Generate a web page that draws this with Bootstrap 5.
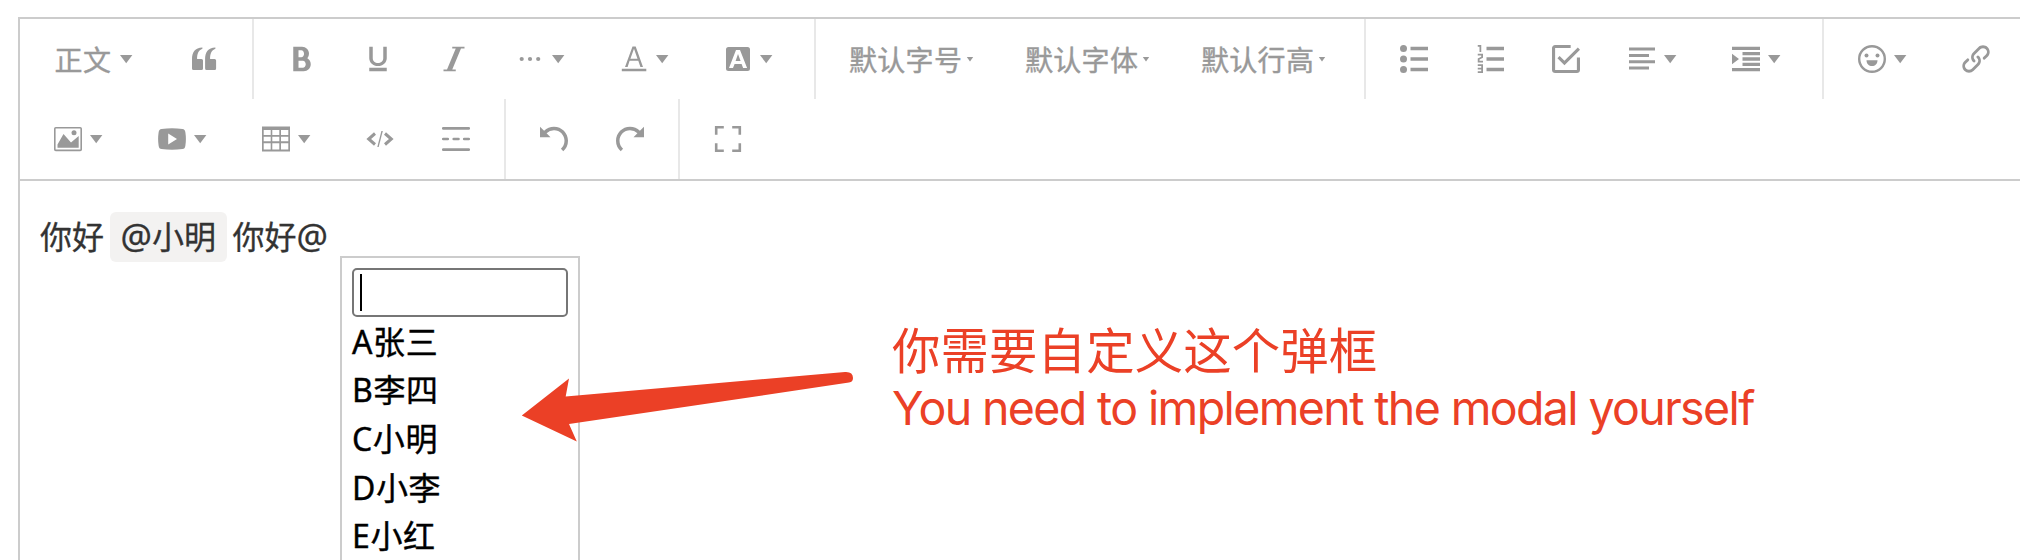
<!DOCTYPE html>
<html lang="zh-CN">
<head>
<meta charset="utf-8">
<title>Editor mention</title>
<link href="https://cdn.jsdelivr.net/npm/bootstrap@5.3.0/dist/css/bootstrap.min.css" rel="stylesheet">
<style>
body{font-family:"Noto Sans","Noto Sans CJK SC",sans-serif;width:2020px;height:560px;color:#333;background:#fff}
.editor{margin:17px 0 0 18px;border:2px solid #ccc;border-width:2px 0 0 2px;height:543px}
.toolbar{border-bottom:2px solid #ccc;height:162px}
.tool-line{height:80px}
.tool-group{padding:0 10px;border-right:2px solid #e8e8e8}
.tool-group:last-child{border-right:0}
.tool{padding:0 24px;border:0;background:none;color:#999;font:28px/28px "Noto Sans CJK SC",sans-serif;white-space:nowrap}
.tool svg{width:28px;height:28px;fill:currentColor;flex:none;display:block}
.tool.style-menu{width:136px}
.tool.style-menu span{width:58px;margin-left:0;letter-spacing:.5px}
.tool.pick{width:176px}
.tool span{flex:none;margin-left:-1px;-webkit-text-stroke:.4px;letter-spacing:.3px}
.tool.pick span{width:113px}
.tool.pick svg{width:16px;height:16px}
.content-area{padding:31px 20px 0;font-size:32px;line-height:50px;height:81px;-webkit-text-stroke:.3px}
.content-area .at{font-size:35px;line-height:40px}
.mention{background:#f3f2f1;border-radius:6px;padding:0 10.500px;margin:0 6px;height:50px;line-height:50px}
.mention-modal{left:340px;top:256px;width:240px;height:320px;border:2px solid #ccc;padding:10px;color:#000;background:#fff}
.mention-modal .search{height:49px;border:2px solid #767676;border-radius:5px;padding:4px 6px;background:#fff}
.search i{display:block;width:2px;height:37px;background:#000}
.mention-modal ul{padding-top:.5px;-webkit-text-stroke:.4px;letter-spacing:.6px}
.mention-modal li{font-size:32px;height:48.700px;line-height:48.700px}
.arrow{left:500px;top:340px}
.note{left:892px;top:318px;color:#eb4026;white-space:nowrap}
.note .zh{font:48.400px/60px "Noto Sans CJK SC",sans-serif;letter-spacing:.15px;height:62px}
.note .en{font:46.500px/56px Inter,sans-serif;letter-spacing:-1.620px}
</style>
</head>
<body class="overflow-hidden position-relative">
<svg class="d-none">
<symbol id="caret" viewBox="0 0 28 28"><path d="M8 10h12.4L14.2 18.200z"/></symbol>
<symbol id="small-caret" viewBox="0 0 16 16"><path d="M4.800 6h6.400L8 10.500z"/></symbol>
</svg>
<div class="editor">
 <div class="toolbar">
  <div class="tool-line d-flex">
   <div class="tool-group d-flex">
    <button class="tool style-menu d-flex align-items-center"><span>正文</span><svg><use href="#caret"/></svg></button>
    <button class="tool d-flex align-items-center"><svg viewBox="0 0 28 28"><path d="M12.400 2.500v1.200C8.400 5.200 7 9 7.100 14H11.500Q13 14 13 15.500V23.500Q13 25 11.500 25H3.500Q2 25 2 23.500V14C2 7.500 5 2.500 12.400 2.500zM25.400 2.500v1.200C21.400 5.200 20 9 20.100 14H24.600Q26.100 14 26.100 15.500V23.500Q26.100 25 24.600 25H16.600Q15.100 25 15.100 23.500V14C15.100 7.500 18 2.500 25.400 2.500z"/></svg></button>
   </div>
   <div class="tool-group d-flex">
    <button class="tool d-flex align-items-center"><svg viewBox="0 0 1024 1024"><path d="M707.872 484.640A254.880 254.880 0 0 0 768 320c0-141.152-114.848-256-256-256H192v896h384c141.152 0 256-114.848 256-256a256.096 256.096 0 0 0-124.128-219.360zM384 192h101.504c55.968 0 101.504 57.408 101.504 128s-45.536 128-101.504 128H384V192zm159.008 640H384v-256h159.008c58.464 0 106.016 57.408 106.016 128s-47.552 128-106.016 128z"/></svg></button>
    <button class="tool d-flex align-items-center"><svg viewBox="0 0 1024 1024"><path d="M704 64h128v416c0 159-143 288-320 288S192 639 192 480V64h128v416c0 99 86 176 192 176s192-77 192-176zM192 832h640v128H192z"/></svg></button>
    <button class="tool d-flex align-items-center"><svg viewBox="0 0 1024 1024"><path d="M896 64v64h-128L448 896h128v64H128v-64h128L576 128h-128V64z"/></svg></button>
    <button class="tool d-flex align-items-center"><svg viewBox="0 0 28 28"><circle cx="5.700" cy="14" r="2.100"/><circle cx="14" cy="14" r="2.100"/><circle cx="22.200" cy="14" r="2.100"/></svg><svg><use href="#caret"/></svg></button>
    <button class="tool d-flex align-items-center"><svg viewBox="0 0 28 28"><path d="M12.500 1.600h3.200L23 22h-2.600l-2.100-6.200H9.600L7.600 22H5zM10.400 13.700h7.100L14 3.800zM1.800 23.700h24.500v2.500H1.800z"/></svg><svg><use href="#caret"/></svg></button>
    <button class="tool d-flex align-items-center"><svg viewBox="0 0 28 28"><path fill-rule="evenodd" d="M4.500 2h19Q26 2 26 4.500v19Q26 26 23.500 26h-19Q2 26 2 23.500v-19Q2 2 4.500 2zM12 5L5 23h4l1.600-4h7l1.500 4h4L16 5zM14 9l2.600 7h-5z"/></svg><svg><use href="#caret"/></svg></button>
   </div>
   <div class="tool-group d-flex">
    <button class="tool pick d-flex align-items-center"><span>默认字号</span><svg><use href="#small-caret"/></svg></button>
    <button class="tool pick d-flex align-items-center"><span>默认字体</span><svg><use href="#small-caret"/></svg></button>
    <button class="tool pick d-flex align-items-center"><span>默认行高</span><svg><use href="#small-caret"/></svg></button>
   </div>
   <div class="tool-group d-flex">
    <button class="tool d-flex align-items-center"><svg viewBox="0 0 1024 1024"><path d="M384 64h640v128H384zM384 448h640v128H384zM384 832h640v128H384zM0 128a128 128 0 1 1 256 0 128 128 0 0 1-256 0zm0 384a128 128 0 1 1 256 0 128 128 0 0 1-256 0zm0 384a128 128 0 1 1 256 0 128 128 0 0 1-256 0z"/></svg></button>
    <button class="tool d-flex align-items-center"><svg viewBox="0 0 1024 1024"><path d="M384 832h640v128H384zm0-384h640v128H384zm0-384h640v128H384zM192 0v256H128V64H64V0zM128 526.016v50.016h128v64H64v-146.016l128-60V384H64v-64h192v146.016zM256 704v320H64v-64h128v-64H64v-64h128v-64H64v-64z"/></svg></button>
    <button class="tool d-flex align-items-center"><svg viewBox="0 0 1024 1024"><path d="M278.750 403.900l-79.640 79.640L455.100 739.550l568.900-568.880-79.640-79.640L455.100 580.260zM910.200 910.200H113.800V113.800h568.900V0H113.800C51.200 0 0 51.200 0 113.800v796.400c0 62.600 51.200 113.800 113.800 113.800h796.400c62.600 0 113.800-51.200 113.800-113.800V455.100h-113.800z"/></svg></button>
    <button class="tool d-flex align-items-center"><svg viewBox="0 0 28 28"><path d="M1 2.600h26v3H1zM1 9h20v3H1zM1 15.200h26v3H1zM1 21.600h20v3H1z"/></svg><svg><use href="#caret"/></svg></button>
    <button class="tool d-flex align-items-center"><svg viewBox="0 0 1024 1024"><path d="M0 60h1024v124H0zm384 192h640v124H384zm0 198h640v124H384zm0 198h640v124H384zM0 840h1024v124H0zm0-136V320l256 192z"/></svg><svg><use href="#caret"/></svg></button>
   </div>
   <div class="tool-group d-flex">
    <button class="tool d-flex align-items-center"><svg viewBox="0 0 28 28"><circle cx="14" cy="14" r="12.800" fill="none" stroke="currentColor" stroke-width="2.400"/><circle cx="8.500" cy="10.500" r="2"/><circle cx="19.500" cy="10.500" r="2"/><path d="M8.500 15.200h11C19.500 19 17 21 14 21s-5.500-2-5.500-5.800z"/></svg><svg><use href="#caret"/></svg></button>
    <button class="tool d-flex align-items-center"><svg viewBox="0 0 1024 1024"><path d="M440.200 635.800a51.800 51.800 0 0 1-36.800-15.200c-95.100-95.100-95.100-249.900 0-345.100l192-192C641.500 37.400 702.800 12 768 12s126.400 25.400 172.500 71.500c95.100 95.100 95.100 249.900 0 345.100l-87.800 87.800a52 52 0 1 1-73.500-73.500l87.800-87.800a140.200 140.200 0 0 0 0-198.100c-26.500-26.500-61.600-41-99-41s-72.600 14.600-99 41l-192 192a140.200 140.200 0 0 0 0 198.100 52 52 0 0 1-36.800 88.700zM256 1012a242.400 242.400 0 0 1-172.500-71.500c-95.100-95.100-95.100-249.900 0-345.100l87.800-87.800a52 52 0 1 1 73.500 73.500l-87.800 87.800a140.200 140.200 0 0 0 0 198.100c26.500 26.500 61.600 41 99 41s72.600-14.600 99-41l192-192a140.200 140.200 0 0 0 0-198.100 52 52 0 1 1 73.500-73.500c95.100 95.100 95.100 249.900 0 345.100l-192 192A242.400 242.400 0 0 1 256 1012z"/></svg></button>
   </div>
  </div>
  <div class="tool-line d-flex">
   <div class="tool-group d-flex">
    <button class="tool d-flex align-items-center"><svg viewBox="0 0 28 28"><rect x=".8" y="2.700" width="26.400" height="22.700" rx="1" fill="none" stroke="currentColor" stroke-width="1.600"/><path d="M3.500 22.700v-3.200L9.500 9l7.500 8.600 7.700-6.600v11.700z"/><circle cx="20" cy="7.800" r="2.500"/></svg><svg><use href="#caret"/></svg></button>
    <button class="tool d-flex align-items-center"><svg viewBox="0 0 28 28"><path fill-rule="evenodd" d="M3.500 4Q14 2.700 24.500 4Q27 4 27.400 7.500Q28.400 14 27.400 20.500Q27 24 24.500 24Q14 25.300 3.500 24Q1 24 .6 20.500Q-.4 14 .6 7.500Q1 4 3.500 4zM10.200 8.400V19.600L19 14z"/></svg><svg><use href="#caret"/></svg></button>
    <button class="tool d-flex align-items-center"><svg viewBox="0 0 28 28"><path fill-rule="evenodd" d="M0 1.500h28v25H0zM1.700 5v5h7V5zM10.300 5v5h7V5zM19 5v5h7.300V5zM1.700 11.700v4.600h7v-4.600zM10.300 11.700v4.600h7v-4.600zM19 11.700v4.600h7.300v-4.600zM1.700 18.200v6.300h7v-6.300zM10.300 18.200v6.300h7v-6.300zM19 18.200v6.300h7.300v-6.300z"/></svg><svg><use href="#caret"/></svg></button>
    <button class="tool d-flex align-items-center"><svg viewBox="0 0 28 28"><path d="M9 8.500L2.700 14L9 19.500M19 8.500L25.300 14L19 19.500" fill="none" stroke="currentColor" stroke-width="3"/><path d="M15.400 6h1.400L12.700 22h-1.400z"/></svg></button>
    <button class="tool d-flex align-items-center"><svg viewBox="0 0 28 28"><path d="M1.200 3.400h25.600M1.200 24.600h25.600M1.200 14h4.600M11.700 14h4.800M22.200 14h4.600" stroke="currentColor" stroke-width="2.600" stroke-linecap="round"/></svg></button>
   </div>
   <div class="tool-group d-flex">
    <button class="tool d-flex align-items-center"><svg viewBox="0 0 1024 1024"><path id="turn" d="M512 64A510.300 510.300 0 0 0 150 214L0 64v384h384L240.500 304.500A382.800 382.800 0 0 1 512 192c212 0 384 172 384 384 0 114.700-50.300 217.600-130 288l84.700 96A510.700 510.700 0 0 0 1024 576C1024 293.200 794.800 64 512 64z"/></svg></button>
    <button class="tool d-flex align-items-center"><svg viewBox="0 0 1024 1024"><use href="#turn" transform="matrix(-1 0 0 1 1024 0)"/></svg></button>
   </div>
   <div class="tool-group d-flex">
    <button class="tool d-flex align-items-center"><svg viewBox="0 0 28 28"><path d="M2.200 9.800V2.200H9.800M18.200 2.200h7.600v7.600M25.800 18.200v7.600h-7.600M9.800 25.800H2.200v-7.600" fill="none" stroke="currentColor" stroke-width="2.600"/></svg></button>
   </div>
  </div>
 </div>
 <div class="content-area d-flex"><span>你好</span><span class="mention"><span class="at">@</span>小明</span><span>你好<span class="at">@</span></span></div>
</div>
<div class="mention-modal position-absolute">
 <div class="search"><i></i></div>
 <ul class="list-unstyled m-0"><li>A张三</li><li>B李四</li><li>C小明</li><li>D小李</li><li>E小红</li></ul>
</div>
<svg class="arrow position-absolute" width="380" height="120"><path fill="#eb4026" d="M21.800 75.500L69 38.500L65.700 56.500L345 32Q353 31.500 353 38Q353 42 349 42.600L69 84L76.800 101.500z"/></svg>
<div class="note position-absolute"><div class="zh">你需要自定义这个弹框</div><div class="en">You need to implement the modal yourself</div></div>
<script src="https://cdn.jsdelivr.net/npm/bootstrap@5.3.0/dist/js/bootstrap.bundle.min.js"></script>
</body>
</html>
